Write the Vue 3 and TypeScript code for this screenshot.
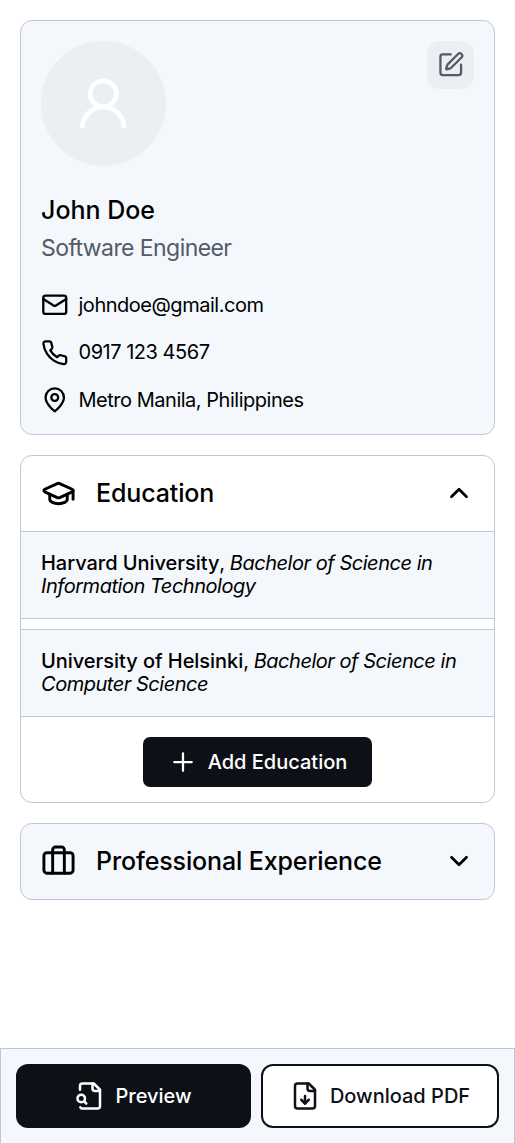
<script setup lang="ts">
import { ref } from 'vue'

interface Contact {
  icon: string[]
  text: string
}

interface School {
  name: string
  degree: string
}

const contacts: Contact[] = [
  {
    icon: [
      'M4 4h16a2 2 0 0 1 2 2v12a2 2 0 0 1-2 2H4a2 2 0 0 1-2-2V6a2 2 0 0 1 2-2z',
      'm22 7-8.97 5.7a1.94 1.94 0 0 1-2.06 0L2 7',
    ],
    text: 'johndoe@gmail.com',
  },
  {
    icon: [
      'M22 16.92v3a2 2 0 0 1-2.18 2 19.79 19.79 0 0 1-8.63-3.07 19.5 19.5 0 0 1-6-6 19.79 19.79 0 0 1-3.07-8.67A2 2 0 0 1 4.11 2h3a2 2 0 0 1 2 1.72 12.84 12.84 0 0 0 .7 2.81 2 2 0 0 1-.45 2.11L8.09 9.91a16 16 0 0 0 6 6l1.27-1.27a2 2 0 0 1 2.11-.45 12.84 12.84 0 0 0 2.81.7A2 2 0 0 1 22 16.92z',
    ],
    text: '0917 123 4567',
  },
  {
    icon: [
      'M20 10c0 6-8 12-8 12s-8-6-8-12a8 8 0 0 1 16 0Z',
      'M15 10a3 3 0 1 1-6 0a3 3 0 0 1 6 0Z',
    ],
    text: 'Metro Manila, Philippines',
  },
]

const schools: School[] = [
  { name: 'Harvard University', degree: 'Bachelor of Science in Information Technology' },
  { name: 'University of Helsinki', degree: 'Bachelor of Science in Computer Science' },
]

const educationOpen = ref(true)
</script>

<template>
  <div class="page">
    <main class="content">
      <section class="card profile">
        <div class="profile-top">
          <div class="avatar">
            <svg viewBox="0 0 24 24"><circle cx="12" cy="8" r="5" /><path d="M20 21a8 8 0 0 0-16 0" /></svg>
          </div>
          <button class="edit" aria-label="Edit">
            <svg class="icon" viewBox="0 0 24 24">
              <path d="M12 3H5a2 2 0 0 0-2 2v14a2 2 0 0 0 2 2h14a2 2 0 0 0 2-2v-7" />
              <path d="M18.375 2.625a1 1 0 0 1 3 3l-9.013 9.014a2 2 0 0 1-.853.505l-2.873.84a.5.5 0 0 1-.62-.62l.84-2.873a2 2 0 0 1 .506-.852z" />
            </svg>
          </button>
        </div>
        <h1 class="name">John Doe</h1>
        <p class="role">Software Engineer</p>
        <ul class="contacts">
          <li v-for="c in contacts" :key="c.text">
            <svg class="icon" viewBox="0 0 24 24"><path v-for="d in c.icon" :key="d" :d="d" /></svg>
            <span>{{ c.text }}</span>
          </li>
        </ul>
      </section>

      <section class="card education">
        <header class="head" @click="educationOpen = !educationOpen">
          <svg class="icon lead" viewBox="0 0 24 24">
            <path d="M21.42 10.922a1 1 0 0 0-.019-1.838L12.83 5.18a2 2 0 0 0-1.66 0L2.6 9.08a1 1 0 0 0 0 1.832l8.57 3.908a2 2 0 0 0 1.66 0z" />
            <path d="M22 10v6" />
            <path d="M6 12.5V16a6 3 0 0 0 12 0v-3.5" />
          </svg>
          <h2>Education</h2>
          <svg class="icon chevron" viewBox="0 0 24 24"><path d="m18 15-6-6-6 6" /></svg>
        </header>
        <div v-if="educationOpen" class="body">
          <div class="schools">
            <p v-for="s in schools" :key="s.name" class="school">
              <strong>{{ s.name }}</strong>, <em>{{ s.degree }}</em>
            </p>
          </div>
          <button class="add">
            <svg class="icon" viewBox="0 0 24 24"><path d="M5 12h14M12 5v14" /></svg>
            <span>Add Education</span>
          </button>
        </div>
      </section>

      <section class="card">
        <header class="head">
          <svg class="icon lead" viewBox="0 0 24 24">
            <rect x="2" y="6" width="20" height="14" rx="2" />
            <path d="M16 20V4a2 2 0 0 0-2-2h-4a2 2 0 0 0-2 2v16" />
          </svg>
          <h2>Professional Experience</h2>
          <svg class="icon chevron" viewBox="0 0 24 24"><path d="m6 9 6 6 6-6" /></svg>
        </header>
      </section>
    </main>

    <footer class="actions">
      <button class="action primary">
        <svg class="icon" viewBox="0 0 24 24">
          <path d="M14 2v4a2 2 0 0 0 2 2h4" />
          <path d="M4.268 21a2 2 0 0 0 1.727 1H18a2 2 0 0 0 2-2V7l-5-5H6a2 2 0 0 0-2 2v3" />
          <path d="m9 18-1.5-1.5" />
          <circle cx="5" cy="14" r="3" />
        </svg>
        <span>Preview</span>
      </button>
      <button class="action outline">
        <svg class="icon" viewBox="0 0 24 24">
          <path d="M15 2H6a2 2 0 0 0-2 2v16a2 2 0 0 0 2 2h12a2 2 0 0 0 2-2V7Z" />
          <path d="M14 2v4a2 2 0 0 0 2 2h4" />
          <path d="M12 18v-6" />
          <path d="m9 15 3 3 3-3" />
        </svg>
        <span>Download PDF</span>
      </button>
    </footer>
  </div>
</template>

<style>
body {
  margin: 0;
  background: #fff;
}
</style>

<style scoped>
* {
  box-sizing: border-box;
}

.page {
  display: flex;
  flex-direction: column;
  height: 1143px;
  font-family: Inter, 'Liberation Sans', sans-serif;
  font-size: 20px;
  color: #000;
}

h1,
h2,
p,
ul {
  margin: 0;
  padding: 0;
}

button {
  font: inherit;
  border: 0;
  padding: 0;
}

.icon {
  flex: none;
  fill: none;
  stroke: currentColor;
  stroke-width: 2;
  stroke-linecap: round;
  stroke-linejoin: round;
}

.content {
  flex: 1;
  display: flex;
  flex-direction: column;
  gap: 20px;
  padding: 20px;
}

.card {
  border: 1px solid #bec6d9;
  border-radius: 12px;
  background: #f4f7fc;
  overflow: hidden;
}

.profile {
  height: 415px;
  padding: 20px;
}

.profile-top {
  display: flex;
  justify-content: space-between;
  align-items: flex-start;
}

.avatar {
  display: flex;
  align-items: center;
  justify-content: center;
  width: 125px;
  height: 125px;
  border-radius: 50%;
  background: #ebeef3;
}

.avatar svg {
  width: 62.5px;
  height: 62.5px;
  margin-top: 2px;
  fill: none;
  stroke: #fff;
  stroke-width: 1.85;
}

.edit {
  display: flex;
  align-items: center;
  justify-content: center;
  width: 47px;
  height: 48px;
  padding: 0 0 1px 1px;
  border-radius: 12px;
  background: #ebeef3;
  color: #535a69;
}

.edit .icon {
  width: 27.5px;
  height: 27.5px;
}

.name {
  margin-top: 29px;
  font-size: 25px;
  font-weight: 500;
  line-height: 30px;
}

.role {
  margin-top: 9px;
  font-size: 23px;
  line-height: 28px;
  letter-spacing: -0.025em;
  color: #535a69;
}

.contacts {
  display: flex;
  flex-direction: column;
  gap: 20px;
  margin-top: 29px;
  list-style: none;
  letter-spacing: -0.024em;
}

.contacts li {
  display: flex;
  align-items: center;
  gap: 10px;
  height: 27.5px;
}

.contacts .icon {
  width: 27.5px;
  height: 27.5px;
}

.education {
  background: #fff;
}

.head {
  display: flex;
  align-items: center;
  gap: 20px;
  height: 75px;
  padding: 0 20px;
}

.lead {
  width: 35px;
  height: 35px;
}

.head h2 {
  flex: 1;
  padding-bottom: 2px;
  font-size: 25px;
  font-weight: 500;
  line-height: 30px;
  letter-spacing: -0.005em;
}

.chevron {
  width: 30px;
  height: 30px;
  margin-bottom: 1px;
  stroke-width: 2.2;
}

.body {
  display: flex;
  flex-direction: column;
  align-items: center;
  padding-bottom: 15px;
}

.schools {
  display: flex;
  flex-direction: column;
  gap: 10px;
  width: 100%;
}

.school {
  height: 88px;
  padding: 20px 20px 0;
  border-top: 1px solid #bec6d9;
  border-bottom: 1px solid #bec6d9;
  background: #f4f7fc;
  font-size: 20px;
  line-height: 23px;
  letter-spacing: -0.0235em;
}

.school strong {
  font-weight: 500;
  letter-spacing: -0.002em;
}

.add {
  display: flex;
  align-items: center;
  justify-content: center;
  gap: 10px;
  width: 229px;
  height: 50px;
  margin-top: 20px;
  border-radius: 7px;
  background: #0d1117;
  color: #fff;
  font-weight: 500;
}

.add .icon {
  width: 30px;
  height: 30px;
  stroke-width: 1.8;
}

.actions {
  display: flex;
  gap: 10px;
  height: 95px;
  padding: 15px;
  border: 1px solid #bec6d9;
  border-bottom: 0;
  background: #f4f7fc;
}

.action {
  display: flex;
  align-items: center;
  justify-content: center;
  gap: 10px;
  height: 64px;
  border-radius: 12px;
  font-weight: 500;
}

.action .icon {
  width: 30px;
  height: 30px;
}

.primary {
  width: 235px;
  background: #0d1117;
  color: #fff;
}

.outline {
  width: 238px;
  border: 2px solid #0d1117;
  background: #fff;
  color: #0d1117;
}
</style>
